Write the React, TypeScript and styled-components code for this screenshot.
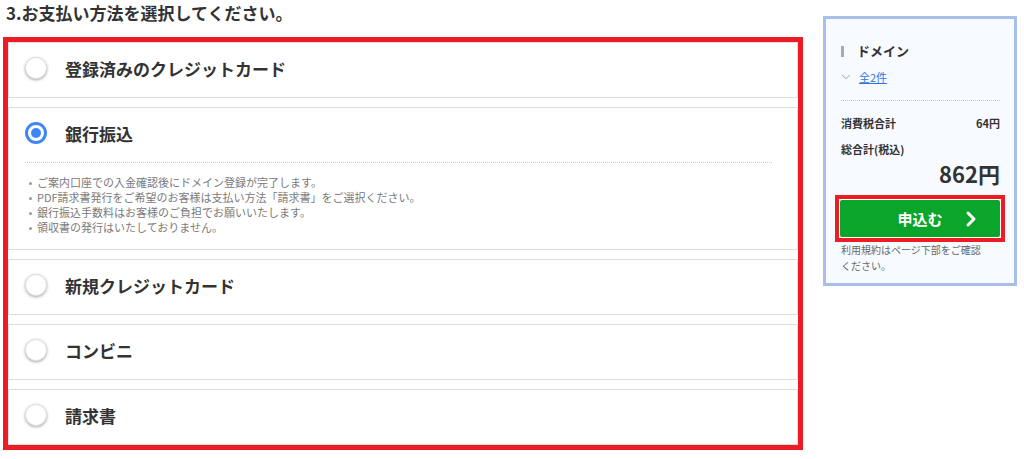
import React from "react";
import styled, { createGlobalStyle } from "styled-components";
import { ChevronRight, ChevronDown } from "lucide-react";

const GlobalStyle = createGlobalStyle`
  html, body { margin: 0; padding: 0; background: #fff; }
  body {
    font-family: "Noto Sans CJK JP", "Noto Sans", sans-serif;
    color: #333;
  }
  * { box-sizing: border-box; }
`;

const Page = styled.div`
  display: flex;
  align-items: flex-start;
  gap: 20px;
  padding-left: 3px;
  width: 1024px;
`;

const Main = styled.section`
  width: 800px;
  display: flex;
  flex-direction: column;
`;

const Title = styled.h2`
  margin: 0 0 11px 3px;
  font-size: 17px;
  line-height: 26px;
  font-weight: 700;
  color: #333;
`;

const Highlight = styled.div`
  border: 5px solid #ed1c24;
  display: flex;
  flex-direction: column;
  gap: 9px;
`;

const Option = styled.div`
  border: 1px solid #ddd;
  background: #fff;
`;

const OptionHead = styled.label`
  display: flex;
  align-items: center;
  gap: 18px;
  height: 54px;
  padding: 0 16px 4px;
  font-size: 17px;
  font-weight: 700;
  color: #333;
`;

const Radio = styled.span<{ $checked?: boolean }>`
  width: 22px;
  height: 22px;
  flex: none;
  border-radius: 50%;
  background: #fff;
  display: flex;
  align-items: center;
  justify-content: center;
  border: ${(p) => (p.$checked ? "3px solid #3f86f5" : "1px solid #e2e2e2")};
  box-shadow: ${(p) =>
    p.$checked ? "none" : "0 1px 3px rgba(0, 0, 0, 0.35)"};
  &::after {
    content: "";
    display: ${(p) => (p.$checked ? "block" : "none")};
    width: 10px;
    height: 10px;
    border-radius: 50%;
    background: #3f86f5;
  }
`;

const Details = styled.ul`
  margin: 0 25px 0 16px;
  padding: 12px 0 14px;
  border-top: 1px dotted #ccc;
  list-style: none;
  font-size: 11px;
  line-height: 15px;
  color: #7a7a7a;
`;

const Note = styled.li`
  white-space: nowrap;
  &::before {
    content: "";
    display: inline-block;
    width: 3px;
    height: 3px;
    border-radius: 50%;
    background: #999;
    margin: 0 5px 2px 4px;
    vertical-align: middle;
  }
`;

const Aside = styled.aside`
  margin-top: 16px;
  width: 194px;
  border: 3px solid #a7bfea;
  background: #f7faff;
  padding: 22px 14px 9px 15px;
  display: flex;
  flex-direction: column;
`;

const Heading = styled.h3`
  margin: 0;
  display: flex;
  align-items: center;
  gap: 13px;
  font-size: 13px;
  line-height: 20px;
  font-weight: 700;
  color: #333;
  &::before {
    content: "";
    width: 3px;
    height: 11px;
    background: #aaa;
  }
`;

const Toggle = styled.div`
  margin-top: 7px;
  display: flex;
  align-items: center;
  gap: 6px;
  line-height: 18px;
  font-size: 11px;
  svg {
    margin-left: -2px;
    color: #8f959c;
  }
`;

const Link = styled.a`
  color: #2b77e0;
  text-decoration: underline;
`;

const Divider = styled.hr`
  margin: 14px 0 0;
  border: 0;
  border-top: 1px dotted #c8c8c8;
`;

const SumRow = styled.div<{ $gap: number }>`
  margin-top: ${(p) => p.$gap}px;
  display: flex;
  justify-content: space-between;
  font-size: 11px;
  line-height: 16px;
  font-weight: 700;
  color: #333;
`;

const Amount = styled.div`
  margin-top: 3px;
  text-align: right;
  font-size: 22px;
  line-height: 26px;
  font-weight: 700;
  color: #333;
`;

const ButtonFrame = styled.div`
  margin: 9px -5px 0 -6px;
  border: 4px solid #ed1c24;
  padding: 1px;
  background: #fff;
`;

const ApplyButton = styled.button`
  width: 100%;
  height: 37px;
  border: 0;
  border-radius: 2px;
  background: #09a62b;
  color: #fff;
  font-family: inherit;
  font-size: 15px;
  font-weight: 700;
  display: grid;
  grid-template-columns: 1fr auto 1fr;
  align-items: center;
  padding: 0;
  span:first-child {
    grid-column: 2;
  }
`;

const Arrow = styled.span`
  grid-column: 3;
  justify-self: end;
  padding-right: 17px;
  display: flex;
`;

const Terms = styled.p`
  margin: 0;
  font-size: 10px;
  line-height: 16px;
  color: #666;
`;

const notes = [
  "ご案内口座での入金確認後にドメイン登録が完了します。",
  "PDF請求書発行をご希望のお客様は支払い方法「請求書」をご選択ください。",
  "銀行振込手数料はお客様のご負担でお願いいたします。",
  "領収書の発行はいたしておりません。",
];

const options = [
  { label: "登録済みのクレジットカード" },
  { label: "銀行振込", checked: true },
  { label: "新規クレジットカード" },
  { label: "コンビニ" },
  { label: "請求書" },
];

export default function App() {
  return (
    <>
      <GlobalStyle />
      <Page>
        <Main>
          <Title>3.お支払い方法を選択してください。</Title>
          <Highlight>
            {options.map((o) => (
              <Option key={o.label}>
                <OptionHead>
                  <Radio $checked={o.checked} />
                  {o.label}
                </OptionHead>
                {o.checked && (
                  <Details>
                    {notes.map((n) => (
                      <Note key={n}>{n}</Note>
                    ))}
                  </Details>
                )}
              </Option>
            ))}
          </Highlight>
        </Main>
        <Aside>
          <Heading>ドメイン</Heading>
          <Toggle>
            <ChevronDown size={14} strokeWidth={1.5} />
            <Link>全2件</Link>
          </Toggle>
          <Divider />
          <SumRow $gap={14}>
            <span>消費税合計</span>
            <span>64円</span>
          </SumRow>
          <SumRow $gap={10}>
            <span>総合計(税込)</span>
          </SumRow>
          <Amount>862円</Amount>
          <ButtonFrame>
            <ApplyButton>
              <span>申込む</span>
              <Arrow>
                <ChevronRight size={24} strokeWidth={3} />
              </Arrow>
            </ApplyButton>
          </ButtonFrame>
          <Terms>
            利用規約はページ下部をご確認
            <br />
            ください。
          </Terms>
        </Aside>
      </Page>
    </>
  );
}
